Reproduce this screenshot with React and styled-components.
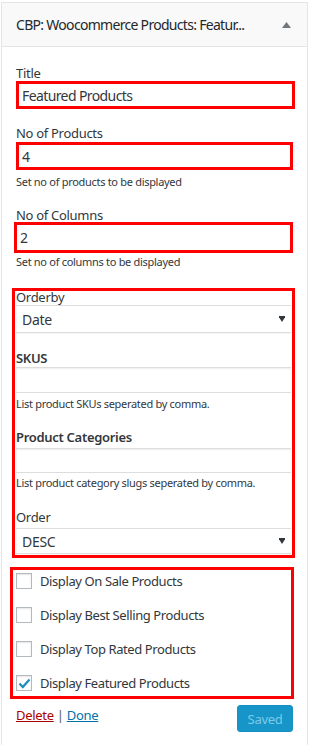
import React from "react";
import styled, { createGlobalStyle } from "styled-components";

const GlobalStyle = createGlobalStyle`
  body {
    margin: 0;
    background: #fff;
    font-family: "Noto Sans", "Open Sans", sans-serif;
    color: #23282d;
  }
  * { box-sizing: border-box; }
`;

const Widget = styled.div`
  margin: 2px 0 0 1px;
  width: 307px;
  min-height: 743px;
  border: 1px solid #e5e5e5;
  border-bottom: none;
  background: #fff;
`;

const WidgetTop = styled.div`
  height: 44px;
  display: flex;
  align-items: center;
  justify-content: space-between;
  padding: 0 16px 0 14px;
  background: #f9f9f9;
  border-bottom: 1px solid #e5e5e5;
`;

const WidgetTitle = styled.h3`
  margin: 0;
  font-size: 14px;
  font-weight: 400;
  line-height: 18px;
  letter-spacing: -0.7px;
  color: #23282d;
  white-space: nowrap;
`;

const Body = styled.div`
  padding: 0 11px 0 14px;
`;

const Label = styled.label`
  display: block;
  margin-top: ${(p) => p.$mt || 0}px;
  font-size: 13px;
  line-height: 14px;
  letter-spacing: -0.3px;
  font-weight: ${(p) => (p.$bold ? 600 : 400)};
  color: #32373c;
`;

const TextInput = styled.input`
  display: block;
  margin-top: ${(p) => p.$mt || 0}px;
  margin-left: ${(p) => p.$ml || 0}px;
  width: ${(p) => p.$w || "100%"};
  height: ${(p) => p.$h || 28}px;
  padding: 0 3px;
  font-family: inherit;
  font-size: 14px;
  letter-spacing: -0.6px;
  color: #32373c;
  background: #fff;
  border: ${(p) => (p.$marked ? "3px solid #ff0000" : "1px solid #ddd")};
  border-left-width: ${(p) => (p.$marked ? 3 : 0)}px;
  border-right-width: ${(p) => (p.$marked ? 3 : 0)}px;
  box-shadow: ${(p) => (p.$marked ? "none" : "inset 0 1px 2px rgba(0,0,0,.07)")};
  outline: none;
  border-radius: 0;
`;

const Help = styled.p`
  margin: ${(p) => p.$mt || 0}px 0 0;
  font-size: 11px;
  line-height: 14px;
  letter-spacing: -0.3px;
  color: #32373c;
`;

const Marked = styled.div`
  margin-top: ${(p) => p.$mt || 0}px;
  margin-left: ${(p) => p.$ml || 0}px;
  width: ${(p) => p.$w}px;
  border: 3px solid #ff0000;
  padding: ${(p) => p.$pad};
`;

const SelectWrap = styled.div`
  position: relative;
  margin-top: ${(p) => p.$mt || 0}px;
  height: ${(p) => p.$h || 28}px;
`;

const Select = styled.select`
  appearance: none;
  -webkit-appearance: none;
  display: block;
  width: 100%;
  height: 100%;
  padding: 0 24px 0 6px;
  font-family: inherit;
  font-size: 14px;
  letter-spacing: -0.3px;
  color: #32373c;
  background: #fff;
  border: 1px solid #ddd;
  border-left: none;
  border-right: none;
  box-shadow: 0 1px 0 rgba(0,0,0,.03);
  border-radius: 0;
  outline: none;
`;

const Caret = styled.svg`
  position: absolute;
  right: 6px;
  top: 50%;
  margin-top: -3px;
  pointer-events: none;
`;

const CheckList = styled.div`
  display: flex;
  flex-direction: column;
  gap: 18px;
`;

const CheckRow = styled.label`
  display: flex;
  align-items: center;
  gap: 8px;
  font-size: 13px;
  line-height: 16px;
  letter-spacing: -0.4px;
  color: #32373c;
`;

const Box = styled.span`
  width: 16px;
  height: 16px;
  flex: none;
  display: flex;
  align-items: center;
  justify-content: center;
  border: 1px solid #b4b9be;
  background: #fff;
  box-shadow: inset 0 1px 2px rgba(0,0,0,.1);
`;

const Footer = styled.div`
  margin-top: 6px;
  padding-right: 3px;
  display: flex;
  justify-content: space-between;
  align-items: flex-start;
`;

const Links = styled.div`
  font-size: 13px;
  line-height: 20px;
  letter-spacing: -0.3px;
  color: #555d66;
`;

const Link = styled.a`
  color: ${(p) => (p.$danger ? "#a00" : "#0073aa")};
  text-decoration: underline;
`;

const SaveButton = styled.button`
  width: 56px;
  height: 27px;
  padding: 0;
  font-family: inherit;
  font-size: 13px;
  letter-spacing: -0.3px;
  color: #7bcbe9;
  background: #1795c8;
  border: 1px solid #1590c2;
  border-radius: 3px;
  cursor: default;
`;

function Arrow() {
  return (
    <svg width="9" height="6" viewBox="0 0 9 6">
      <path d="M0 6 L4.5 0 L9 6 Z" fill="#72777c" />
    </svg>
  );
}

function Dropdown({ value, options, mt, h }) {
  return (
    <SelectWrap $mt={mt} $h={h}>
      <Select defaultValue={value}>
        {options.map((o) => (
          <option key={o}>{o}</option>
        ))}
      </Select>
      <Caret width="6" height="6" viewBox="0 0 6 6">
        <path d="M0 0 H6 V1.2 L3 6 L0 1.2 Z" fill="#32373c" />
      </Caret>
    </SelectWrap>
  );
}

const checks = [
  { label: "Display On Sale Products", checked: false },
  { label: "Display Best Selling Products", checked: false },
  { label: "Display Top Rated Products", checked: false },
  { label: "Display Featured Products", checked: true },
];

export default function App() {
  return (
    <>
      <GlobalStyle />
      <Widget>
        <WidgetTop>
          <WidgetTitle>CBP: Woocommerce Products: Featur...</WidgetTitle>
          <Arrow />
        </WidgetTop>
        <Body>
          <Label $mt={19}>Title</Label>
          <TextInput $marked $mt={1} $w="279px" defaultValue="Featured Products" />

          <Label $mt={17}>No of Products</Label>
          <TextInput $marked $mt={2} $w="277px" defaultValue="4" />
          <Help $mt={5}>Set no of products to be displayed</Help>

          <Label $mt={19}>No of Columns</Label>
          <TextInput $marked $ml={-2} $w="279px" $h={31} defaultValue="2" />
          <Help $mt={2}>Set no of columns to be displayed</Help>

          <Marked $mt={19} $ml={-4} $w={283} $pad="0 1px 1px 1px">
            <Label $mt={-1}>Orderby</Label>
            <Dropdown value="Date" options={["Date", "Title", "Price", "Random"]} mt={1} h={28} />

            <Label $mt={18} $bold>SKUS</Label>
            <TextInput $mt={2} $h={26} />
            <Help $mt={4}>List product SKUs seperated by comma.</Help>

            <Label $mt={19} $bold>Product Categories</Label>
            <TextInput $mt={4} $h={25} />
            <Help $mt={3}>List product category slugs seperated by comma.</Help>

            <Label $mt={20}>Order</Label>
            <Dropdown value="DESC" options={["DESC", "ASC"]} mt={4} h={26} />
          </Marked>

          <Marked $mt={9} $ml={-6} $w={284} $pad="3px 0 5px 3px">
            <CheckList>
              {checks.map((c) => (
                <CheckRow key={c.label}>
                  <Box>
                    {c.checked && (
                      <svg width="13" height="11" viewBox="0 0 13 11">
                        <path d="M1.5 5.5 L4.8 9 L11.5 1.5" fill="none" stroke="#1e8cbe" strokeWidth="2.2" />
                      </svg>
                    )}
                  </Box>
                  {c.label}
                </CheckRow>
              ))}
            </CheckList>
          </Marked>

          <Footer>
            <Links>
              <Link $danger href="#delete">Delete</Link> | <Link href="#done">Done</Link>
            </Links>
            <SaveButton disabled>Saved</SaveButton>
          </Footer>
        </Body>
      </Widget>
    </>
  );
}
